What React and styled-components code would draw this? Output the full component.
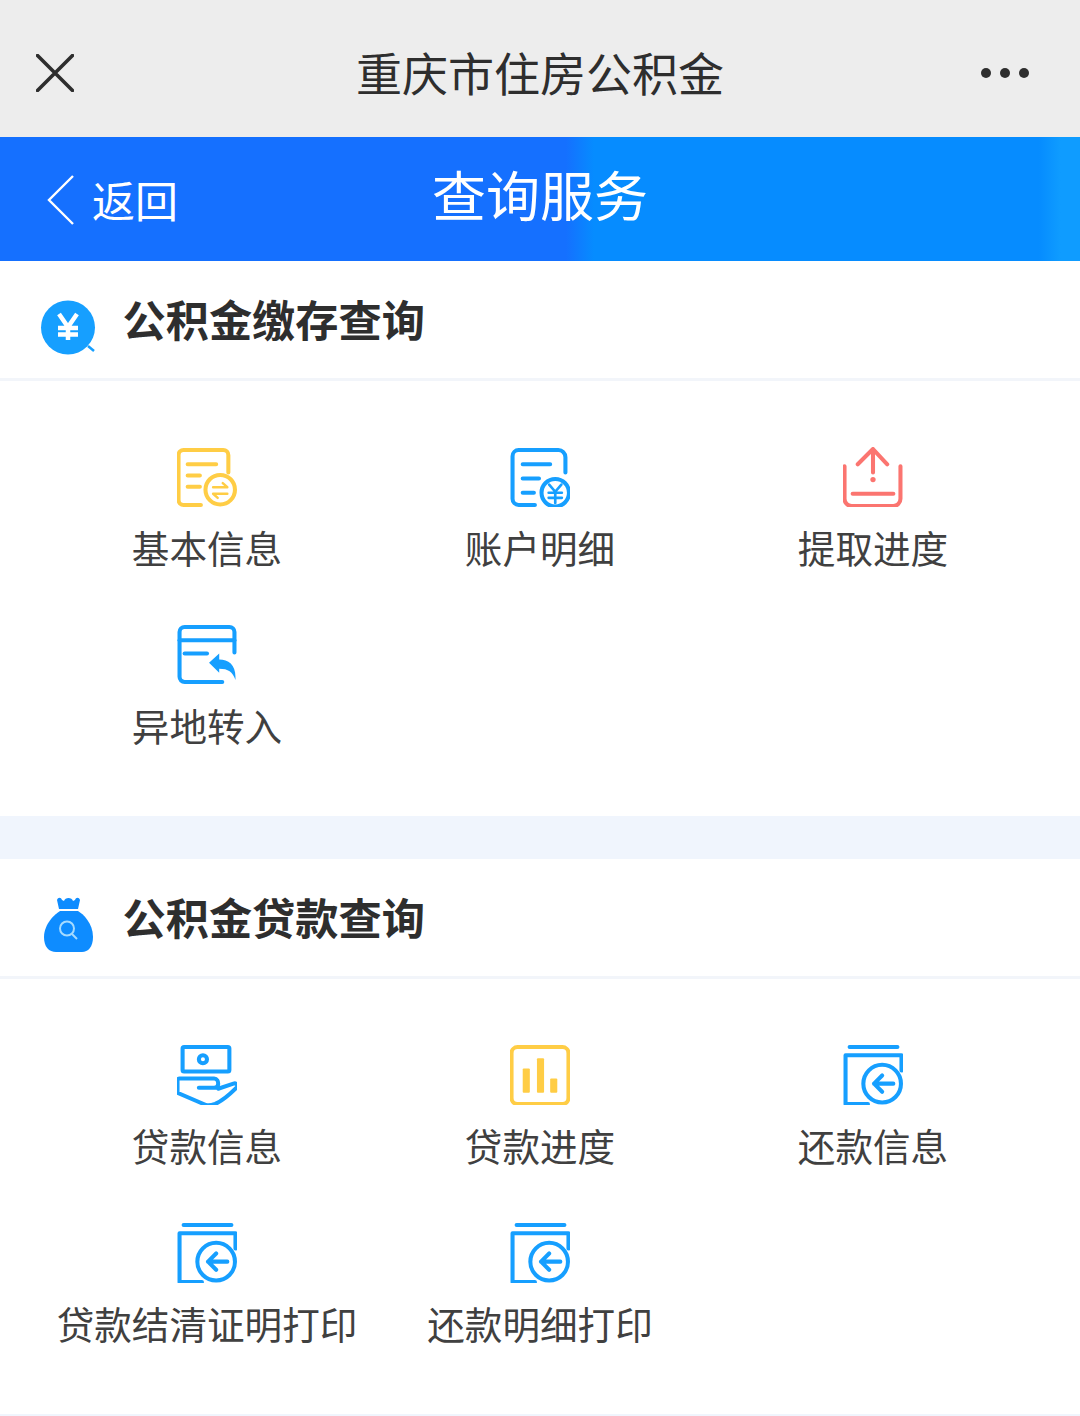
import React from 'react';
import styled, { createGlobalStyle } from 'styled-components';

const BLUE = '#169fff';
const YELLOW = '#ffcd45';
const RED = '#fb7570';

const GlobalStyle = createGlobalStyle`
    html, body {
        margin: 0;
        padding: 0;
        background: #f0f5fd;
        font-family: "Noto Sans CJK SC", "Noto Sans", sans-serif;
    }
`;

const Page = styled.div`
    width: 1080px;
    height: 1416px;
    overflow: hidden;
`;

const TopBar = styled.header`
    height: 137px;
    box-sizing: border-box;
    background: #ededed;
    display: grid;
    grid-template-columns: 1fr auto 1fr;
    align-items: center;
    padding: 8px 36px 0;
    color: #2e2e2e;
`;

const TopTitle = styled.h1`
    margin: 0 0 3px;
    font-size: 46px;
    line-height: 60px;
    font-weight: 400;
`;

const CloseButton = styled.svg`
    display: block;
    width: 38px;
    height: 38px;
`;

const MoreButton = styled.svg`
    display: block;
    width: 48px;
    height: 10px;
    justify-self: end;
    margin-right: 15px;
`;

const NavBar = styled.nav`
    height: 124px;
    display: grid;
    grid-template-columns: 1fr auto 1fr;
    align-items: center;
    padding: 0 47px;
    color: #fff;
    background: linear-gradient(
        90deg,
        #1570ff 0%,
        #1570ff 52.4%,
        #068cff 55%,
        #068cff 96.2%,
        #0f9cff 98.2%,
        #0f9cff 100%
    );
`;

const BackLink = styled.div`
    display: flex;
    align-items: center;
    gap: 18px;
    font-size: 43px;
    line-height: 50px;
`;

const BackChevron = styled.svg`
    display: block;
    width: 27px;
    height: 50px;
    margin-top: 2px;
`;

const NavTitle = styled.h2`
    margin: 0 0 10px;
    font-size: 54px;
    line-height: 64px;
    font-weight: 400;
`;

const Section = styled.section`
    background: #fff;
    height: 555px;
    margin-bottom: 43px;
`;

const SectionHeader = styled.div`
    height: 117px;
    box-sizing: content-box;
    border-bottom: 3px solid #f2f5fa;
    padding-left: 40px;
    display: flex;
    align-items: center;
    gap: 22.5px;
`;

const SectionIcon = styled.svg`
    display: block;
    width: 60px;
    height: 70px;
    flex: none;
`;

const SectionTitle = styled.h3`
    margin: 0 0 3px;
    font-size: 43.2px;
    line-height: 56px;
    font-weight: 700;
    color: #2e2e2e;
`;

const Grid = styled.div`
    display: grid;
    grid-template-columns: repeat(3, 333px);
    grid-auto-rows: 178px;
    padding: 66px 40px 0 40.5px;
`;

const Cell = styled.div`
    display: flex;
    flex-direction: column;
    align-items: center;
`;

const CellIcon = styled.svg.attrs({ viewBox: '0.5 0 59 59' })`
    display: block;
    width: 60px;
    height: 60px;
    flex: none;
    fill: none;
    stroke: ${(props) => props.$color};
    stroke-width: 4;
    stroke-linecap: round;
    stroke-linejoin: round;
`;

const CellLabel = styled.span`
    margin-top: 18px;
    font-size: 37.6px;
    line-height: 43px;
    font-weight: 400;
    color: #404040;
    white-space: nowrap;
`;

const Filled = styled.g`
    fill: ${(props) => props.$color};
    stroke: none;
`;

const ExchangeIcon = () => (
    <CellIcon $color={YELLOW}>
        <path d="M24 57H7a5 5 0 0 1-5-5V8a5 5 0 0 1 5-5h39a5 5 0 0 1 5 5v17" />
        <path d="M11 17h28M11 28h12M11 39h12" />
        <circle cx="43" cy="42" r="14.5" />
        <path d="M36 39.5h14l-4.5-4M50 46H36l4.5 4" strokeWidth="2.4" />
    </CellIcon>
);

const LedgerIcon = () => (
    <CellIcon $color={BLUE}>
        <path d="M25 57H9a6 6 0 0 1-6-6V9a6 6 0 0 1 6-6h39a7 7 0 0 1 7 7v15" />
        <path d="M13 17h27M13 31h16M13 45h11" />
        <circle cx="45" cy="45" r="13.5" />
        <path d="M39 37l6 7 6-7M38.500 45h13M38.500 50h13M45 44v11" strokeWidth="2.6" />
    </CellIcon>
);

const UploadIcon = () => (
    <CellIcon $color={RED}>
        <path d="M2 19v32a7 7 0 0 0 7 7h41a7 7 0 0 0 7-7V19" />
        <path d="M10 46h40" />
        <path d="M15 17L30 2l14 15M30 3v22" />
        <Filled $color={RED}>
            <circle cx="30" cy="32" r="2.600" />
        </Filled>
    </CellIcon>
);

const TransferIcon = () => (
    <CellIcon $color={BLUE}>
        <path d="M45 56H8a5 5 0 0 1-5-5V7a5 5 0 0 1 5-5h44a5 5 0 0 1 5 5v20" />
        <path d="M3 15h54" />
        <path d="M8 28h22" />
        <Filled $color={BLUE}>
            <path d="M32 37l10-9v6c9 0 16 5 16 17v3c-3-8-7-11-16-11v4z" />
        </Filled>
    </CellIcon>
);

const MoneyHandIcon = () => (
    <CellIcon $color={BLUE}>
        <rect x="6" y="2" width="46" height="24" rx="1.500" />
        <circle cx="26" cy="14" r="4" />
        <path d="M22 42h15c3 0 4-2 4-4s-1-5-4-5H3a2 2 0 0 0-2 2v12l28 12c3 1 6 0 9-1 7-3 14-9 21-16 2-2 0-5-3-4l-15 5" />
    </CellIcon>
);

const ChartIcon = () => (
    <CellIcon $color={YELLOW}>
        <rect x="2" y="2" width="56" height="56" rx="6" />
        <Filled $color={YELLOW}>
            <rect x="13" y="23" width="7" height="24" rx="1" />
            <rect x="27" y="13" width="7" height="34" rx="1" />
            <rect x="40" y="33" width="7" height="14" rx="1" />
        </Filled>
    </CellIcon>
);

const ReturnIcon = () => (
    <CellIcon $color={BLUE}>
        <path d="M7 2h47" />
        <path d="M25 58H3V10h55v15" />
        <circle cx="39" cy="38" r="18.500" />
        <path d="M50 38H31M39 30l-8 8 8 8" />
    </CellIcon>
);

const sections = [
    {
        title: '公积金缴存查询',
        icon: (
            <SectionIcon viewBox="0 0 60 70">
                <circle cx="28" cy="42.500" r="27" fill={BLUE} />
                <path d="M48 61l6 5" stroke={BLUE} strokeWidth="2.500" fill="none" />
                <path d="M19 29l9 13 9-13M18 43h20M18 49.500h20M28 42v13" stroke="#fff" strokeWidth="4.500" fill="none" />
            </SectionIcon>
        ),
        items: [
            { label: '基本信息', Icon: ExchangeIcon },
            { label: '账户明细', Icon: LedgerIcon },
            { label: '提取进度', Icon: UploadIcon },
            { label: '异地转入', Icon: TransferIcon },
        ],
    },
    {
        title: '公积金贷款查询',
        icon: (
            <SectionIcon viewBox="0 0 60 70">
                <path d="M17 17c1-3 4-3 5 0l2 1c1-4 8-4 9 0l2-1c1-3 4-3 5 0l-2 9H19z" fill="#0e8cff" />
                <path d="M20 28h18c5 3 15 12 15 26 0 10-5 15-11 15H16C9 69 4 64 4 54 4 41 15 31 20 28z" fill="#0e8cff" />
                <circle cx="27" cy="45.500" r="7" fill="none" stroke="#a6dbff" strokeWidth="2" />
                <path d="M32 51l5 5" stroke="#a6dbff" strokeWidth="2" fill="none" />
            </SectionIcon>
        ),
        items: [
            { label: '贷款信息', Icon: MoneyHandIcon },
            { label: '贷款进度', Icon: ChartIcon },
            { label: '还款信息', Icon: ReturnIcon },
            { label: '贷款结清证明打印', Icon: ReturnIcon },
            { label: '还款明细打印', Icon: ReturnIcon },
        ],
    },
];

const App = () => {
    return (
        <Page>
            <GlobalStyle />
            <TopBar>
                <CloseButton viewBox="0 0 38 38">
                    <path d="M1.500 1.500l35 35M36.500 1.500l-35 35" stroke="#2e2e2e" strokeWidth="3.600" strokeLinecap="round" />
                </CloseButton>
                <TopTitle>重庆市住房公积金</TopTitle>
                <MoreButton viewBox="0 0 48 10">
                    <circle cx="5" cy="5" r="5" fill="#2e2e2e" />
                    <circle cx="24" cy="5" r="5" fill="#2e2e2e" />
                    <circle cx="43" cy="5" r="5" fill="#2e2e2e" />
                </MoreButton>
            </TopBar>
            <NavBar>
                <BackLink>
                    <BackChevron viewBox="0 0 27 50">
                        <path d="M26 1L2 25l24 24" fill="none" stroke="#fff" strokeWidth="2.400" />
                    </BackChevron>
                    返回
                </BackLink>
                <NavTitle>查询服务</NavTitle>
            </NavBar>
            {sections.map((section) => (
                <Section key={section.title}>
                    <SectionHeader>
                        {section.icon}
                        <SectionTitle>{section.title}</SectionTitle>
                    </SectionHeader>
                    <Grid>
                        {section.items.map(({ label, Icon }) => (
                            <Cell key={label}>
                                <Icon />
                                <CellLabel>{label}</CellLabel>
                            </Cell>
                        ))}
                    </Grid>
                </Section>
            ))}
        </Page>
    );
};

export default App;
